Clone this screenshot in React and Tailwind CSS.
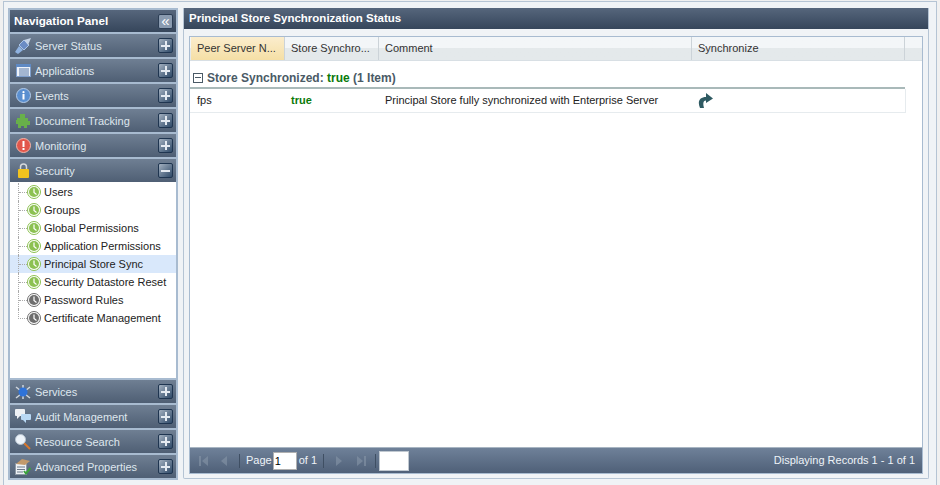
import React from "react";

const F = "font-['Liberation_Sans',Arial,sans-serif]";

function ServerIcon() {
  return (
    <svg width="18" height="18" viewBox="0 0 18 18">
      <path d="M1 15 L5 9 L9 13 L4 17 Z" fill="#8fb2e0" />
      <path d="M5 8 L10 3 L15 8 L10 13 Z" fill="#6b8cc4" stroke="#a8c2e6" />
      <path d="M10 3 L17 1 L14 8 Z" fill="#c5d3e6" />
    </svg>
  );
}

function AppsIcon() {
  return (
    <svg width="15" height="13" viewBox="0 0 15 13">
      <rect x="0.5" y="0.5" width="14" height="12" fill="#eef3fa" stroke="#7f9fcc" />
      <rect x="0" y="0" width="15" height="3" fill="#5f8ac4" />
      <path d="M3 5H13M3 7H13M3 9H13M3 11H13" stroke="#5b7ba8" />
    </svg>
  );
}

function InfoIcon() {
  return (
    <svg width="15" height="15" viewBox="0 0 15 15">
      <circle cx="7.5" cy="7.5" r="7" fill="#5a8fd0" stroke="#b4cbe8" />
      <circle cx="7.5" cy="4.2" r="1.1" fill="#fff" />
      <rect x="6.5" y="6" width="2" height="5.5" fill="#fff" />
    </svg>
  );
}

function PuzzleIcon() {
  return (
    <svg width="14" height="15" viewBox="0 0 14 15">
      <path d="M1 5H4V1H9V5H12V8H14V12H11V15H8V13H5V15H2V11H0V7H1Z" fill="#68b04a" />
    </svg>
  );
}

function AlertIcon() {
  return (
    <svg width="15" height="15" viewBox="0 0 15 15">
      <circle cx="7.5" cy="7.5" r="7" fill="#e2574c" stroke="#f2b5a8" />
      <rect x="6.5" y="3" width="2" height="6" fill="#fff" />
      <rect x="6.5" y="10" width="2" height="2" fill="#fff" />
    </svg>
  );
}

function LockIcon() {
  return (
    <svg width="11" height="15" viewBox="0 0 11 15">
      <path d="M2.5 7V4a3 3 0 0 1 6 0V7" fill="none" stroke="#d5d8dc" strokeWidth="1.5" />
      <rect x="0" y="6" width="11" height="9" rx="1" fill="#f2c31f" />
    </svg>
  );
}

function ServicesIcon() {
  return (
    <svg width="16" height="16" viewBox="0 0 16 16">
      <path d="M1 3L15 14M15 3L1 14M8 1V15" stroke="#cfd6de" strokeWidth="1.5" />
      <circle cx="8" cy="8" r="4.5" fill="#2f73d8" />
    </svg>
  );
}

function ChatIcon() {
  return (
    <svg width="16" height="15" viewBox="0 0 16 15">
      <path d="M1 0H9a1 1 0 0 1 1 1V6a1 1 0 0 1-1 1H5L2 10V7H1a1 1 0 0 1-1-1V1a1 1 0 0 1 1-1Z" fill="#eef1f5" />
      <path d="M7 5H15a1 1 0 0 1 1 1V10a1 1 0 0 1-1 1H11V14L8 11H7a1 1 0 0 1-1-1V6a1 1 0 0 1 1-1Z" fill="#b9d9f5" />
    </svg>
  );
}

function SearchIcon() {
  return (
    <svg width="16" height="16" viewBox="0 0 16 16">
      <path d="M9 9L15 15" stroke="#d9772b" strokeWidth="2" />
      <circle cx="5.5" cy="5.5" r="5" fill="#eef4fa" stroke="#b8c4d0" />
    </svg>
  );
}

function PropsIcon() {
  return (
    <svg width="16" height="17" viewBox="0 0 16 17">
      <rect x="0.5" y="5.5" width="11" height="11" fill="#eef2f6" stroke="#8d99a6" />
      <path d="M2 9H10M2 11.5H10M2 14H8" stroke="#6c7a88" />
      <path d="M1 6L7 1L15 3L10 7Z" fill="#c29a6b" />
      <path d="M9 13L11 15.5L15.5 10" fill="none" stroke="#3aa23a" strokeWidth="2" />
    </svg>
  );
}

function ClockIcon({ grey }) {
  const c = grey ? "#6e6e6e" : "#8cc152";
  return (
    <svg width="14" height="14" viewBox="0 0 14 14" className="shrink-0">
      <circle cx="7" cy="7" r="6.5" fill="#fff" stroke={c} />
      <circle cx="7" cy="7" r="5" fill={c} />
      <path d="M7 3.5V7.5L9.5 9.5" fill="none" stroke="#fff" strokeWidth="1.2" />
    </svg>
  );
}

function SyncIcon() {
  return (
    <svg width="15" height="15" viewBox="0 0 15 15">
      <path d="M2 15C-1 8 2 4 8 4V0L15 5.5L8 10V7.5C5.5 7.5 4.5 10 6 15Z" fill="#2e5a62" />
    </svg>
  );
}

function Toggle({ minus }) {
  return (
    <span className="w-[15px] h-[15px] rounded-[2px] border border-[#1f3550] bg-gradient-to-br from-[#a4b1c0] to-[#2f4a68] flex items-center justify-center">
      <span className="relative w-[9px] h-[9px] flex items-center justify-center">
        <span className="w-[9px] h-[2px] bg-[#e4eaf1]"></span>
        {!minus && <span className="absolute w-[2px] h-[9px] bg-[#e4eaf1]"></span>}
      </span>
    </span>
  );
}

function NavRow({ icon, label, minus }) {
  return (
    <div className="h-[23px] flex items-center bg-gradient-to-b from-[#6f7f93] to-[#4f5f74]">
      <span className="w-[24px] pl-[2px] flex items-center justify-center shrink-0">{icon}</span>
      <span className="ml-[1px] pt-[2px] text-[11px] text-[#dfe7ee] flex-1">{label}</span>
      <span className="mr-[3px] flex"><Toggle minus={minus} /></span>
    </div>
  );
}

function TreeRow({ label, grey, active, last }) {
  return (
    <div className={`h-[18px] flex items-center pl-[8px] text-[11px] text-[#222] ${active ? "bg-[#d9e8fb]" : ""}`}>
      {last ? (
        <span className="w-[9px] h-[10px] self-start border-l border-b border-dotted border-[#aaa]"></span>
      ) : (
        <span className="w-[9px] h-full flex items-center border-l border-dotted border-[#aaa]">
          <span className="w-full border-t border-dotted border-[#aaa]"></span>
        </span>
      )}
      <ClockIcon grey={grey} />
      <span className="ml-[3px]">{label}</span>
    </div>
  );
}

function PagerGlyph({ dir, bar }) {
  return (
    <svg width="12" height="12" viewBox="0 0 12 12" className="opacity-60 shrink-0">
      {bar && <rect x={dir === "l" ? 1 : 9} y="1" width="2" height="10" fill="#8796a8" />}
      <path d={dir === "l" ? "M10 1V11L4 6Z" : "M2 1V11L8 6Z"} fill="#8796a8" />
    </svg>
  );
}

const treeItems = [
  ["Users"],
  ["Groups"],
  ["Global Permissions"],
  ["Application Permissions"],
  ["Principal Store Sync", false, true],
  ["Security Datastore Reset"],
  ["Password Rules", true],
  ["Certificate Management", true, false, true],
];

function App() {
  return (
    <div className={`${F} w-[940px] h-[485px] bg-[#f0f0f0] overflow-hidden pl-[3px] pt-[1px]`}>
      <div className="w-[934px] h-[484px] border-l border-t border-r border-[#b5c4d4] bg-[#f0f3f6] flex pl-[4px] pt-[6px] gap-[5px]">
        <div className="w-[170px] h-[472px] border-2 border-[#a8bbd0] flex flex-col bg-[#a8bbd0]">
          <div className="h-[22px] bg-gradient-to-b from-[#56667c] to-[#36465b] flex items-center justify-between pl-[4px] pr-[3px] shrink-0">
            <span className="text-[11.7px] font-bold text-white">Navigation Panel</span>
            <span className="w-[15px] h-[15px] rounded-[2px] bg-[#8a9bb0] border border-[#2c3e55] text-white text-[15px] leading-[11px] text-center">«</span>
          </div>
          <div className="flex flex-col gap-[2px] mt-[2px]">
            <NavRow icon={<ServerIcon />} label="Server Status" />
            <NavRow icon={<AppsIcon />} label="Applications" />
            <NavRow icon={<InfoIcon />} label="Events" />
            <NavRow icon={<PuzzleIcon />} label="Document Tracking" />
            <NavRow icon={<AlertIcon />} label="Monitoring" />
            <NavRow icon={<LockIcon />} label="Security" minus />
          </div>
          <div className="flex-1 bg-white mb-[2px] pt-[1px]">
            {treeItems.map(([label, grey, active, last]) => (
              <TreeRow key={label} label={label} grey={grey} active={active} last={last} />
            ))}
          </div>
          <div className="flex flex-col gap-[2px]">
            <NavRow icon={<ServicesIcon />} label="Services" />
            <NavRow icon={<ChatIcon />} label="Audit Management" />
            <NavRow icon={<SearchIcon />} label="Resource Search" />
            <NavRow icon={<PropsIcon />} label="Advanced Properties" />
          </div>
        </div>

        <div className="w-[746px] h-[471px] border border-[#b5c4d4] border-t-0 rounded-b-[2px] flex flex-col bg-[#f0f3f6]">
          <div className="h-[21px] bg-gradient-to-b from-[#56667c] to-[#36465b] flex items-center px-[5px] pt-[1px] text-[11.5px] font-bold text-white shrink-0">
            Principal Store Synchronization Status
          </div>
          <div className="flex-1 flex flex-col mx-[5px] mt-[7px] mb-[4px] border border-[#a8bbd0] bg-white">
            <div className="h-[24px] flex text-[11px] text-[#333] shrink-0 bg-gradient-to-b from-[#f3f6f8] from-50% to-[#e4e9eb] to-50% border-b border-[#d8dfe4]">
              <div className="w-[94px] ml-[1px] pl-[6px] flex items-center border-r border-[#ccd3d8] bg-gradient-to-b from-[#fbedcd] to-[#f5dfa5]">Peer Server N...</div>
              <div className="w-[94px] pl-[6px] flex items-center border-r border-[#ccd3d8]">Store Synchro...</div>
              <div className="w-[313px] pl-[6px] flex items-center border-r border-[#ccd3d8]">Comment</div>
              <div className="w-[213px] pl-[6px] flex items-center border-r border-[#ccd3d8]">Synchronize</div>
            </div>
            <div className="flex-1">
              <div className="w-[715px] mt-[9px] h-[19px] flex items-center pl-[3px] pb-[2px] text-[12px] font-bold text-[#4a5a66] border-b-2 border-[#a9b9b9]">
                <span className="w-[10px] h-[10px] mr-[4px] border border-[#4a5a66] flex items-center justify-center">
                  <span className="w-[6px] h-[1px] bg-[#4a5a66]"></span>
                </span>
                Store Synchronized:&nbsp;<span className="text-[#0a7a0a]">true</span>&nbsp;(1 Item)
              </div>
              <div className="w-[716px] h-[24px] flex items-center text-[11px] text-[#222] border-r border-b border-[#e6ebee]">
                <span className="w-[94px] pl-[7px]">fps</span>
                <span className="w-[94px] pl-[7px] font-bold text-[#0a7a0a]">true</span>
                <span className="w-[313px] pl-[7px]">Principal Store fully synchronized with Enterprise Server</span>
                <span className="pl-[7px] flex items-center"><SyncIcon /></span>
              </div>
            </div>
            <div className="h-[26px] shrink-0 bg-gradient-to-b from-[#6f8199] to-[#4f6078] flex items-center text-[11px] text-[#eef3f8] border-t border-[#a8b5c2] pl-[8px] pr-[7px]">
              <PagerGlyph dir="l" bar />
              <span className="w-[7px]"></span>
              <PagerGlyph dir="l" />
              <span className="w-[1px] h-[14px] bg-[#3f4f63] ml-[10px] mr-[6px]"></span>
              Page
              <span className="w-[24px] h-[18px] ml-[1px] mr-[2px] bg-white border border-[#b0b0b0] text-black pl-[1px] leading-[16px]">1</span>
              of 1
              <span className="w-[1px] h-[14px] bg-[#3f4f63] ml-[6px] mr-[10px]"></span>
              <PagerGlyph dir="r" />
              <span className="w-[9px]"></span>
              <PagerGlyph dir="r" bar />
              <span className="w-[1px] h-[14px] bg-[#3f4f63] ml-[8px] mr-[3px]"></span>
              <span className="w-[30px] h-[20px] bg-white border border-[#c0c8d0]"></span>
              <span className="ml-auto">Displaying Records 1 - 1 of 1</span>
            </div>
          </div>
        </div>
      </div>
    </div>
  );
}

export default App;
